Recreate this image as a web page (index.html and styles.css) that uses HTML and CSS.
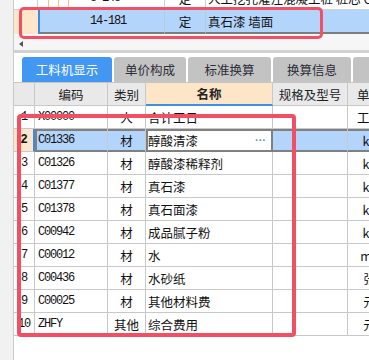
FILE: index.html
```html
<!DOCTYPE html>
<html lang="zh">
<head>
<meta charset="utf-8">
<link rel="stylesheet" href="styles.css">
</head>
<body>
<div class="app">
  <div class="strip"></div>
  <div class="main">
    <div class="tgrid">
      <div class="trow r0">
        <div class="c hd"></div>
        <div class="c tree mono">8-148</div>
        <div class="c ty">定</div>
        <div class="c nm">人工挖孔灌注混凝土桩 桩芯 C30</div>
      </div>
      <div class="trow r1">
        <div class="c hd"></div>
        <div class="c tree mono">14-181</div>
        <div class="c ty">定</div>
        <div class="c nm">真石漆 墙面</div>
      </div>
    </div>
    <div class="hscroll"><span class="arrow"></span></div>
    <div class="split"></div>
    <div class="tabs">
      <div class="tab on t1">工料机显示</div>
      <div class="tab t2">单价构成</div>
      <div class="tab t3">标准换算</div>
      <div class="tab t4">换算信息</div>
      <div class="tab t5"></div>
    </div>
    <div class="grid">
      <div class="row head">
        <div class="c"></div>
        <div class="c ctr">编码</div>
        <div class="c ctr">类别</div>
        <div class="c ctr name-h">名称</div>
        <div class="c ctr">规格及型号</div>
        <div class="c ctr">单位</div>
      </div>
      <div class="row">
        <div class="c num">1</div><div class="c code">X00000</div><div class="c ctr">人</div><div class="c nmc">合计工日</div><div class="c"></div><div class="c ctr">工日</div>
      </div>
      <div class="row sel">
        <div class="c num">2</div><div class="c code">C01336</div><div class="c ctr">材</div><div class="c nmc edit"><span>醇酸清漆</span><span class="dots">···</span></div><div class="c"></div><div class="c ctr">kg</div>
      </div>
      <div class="row">
        <div class="c num">3</div><div class="c code">C01326</div><div class="c ctr">材</div><div class="c nmc">醇酸漆稀释剂</div><div class="c"></div><div class="c ctr">kg</div>
      </div>
      <div class="row">
        <div class="c num">4</div><div class="c code">C01377</div><div class="c ctr">材</div><div class="c nmc">真石漆</div><div class="c"></div><div class="c ctr">kg</div>
      </div>
      <div class="row">
        <div class="c num">5</div><div class="c code">C01378</div><div class="c ctr">材</div><div class="c nmc">真石面漆</div><div class="c"></div><div class="c ctr">kg</div>
      </div>
      <div class="row">
        <div class="c num">6</div><div class="c code">C00942</div><div class="c ctr">材</div><div class="c nmc">成品腻子粉</div><div class="c"></div><div class="c ctr">kg</div>
      </div>
      <div class="row">
        <div class="c num">7</div><div class="c code">C00012</div><div class="c ctr">材</div><div class="c nmc">水</div><div class="c"></div><div class="c ctr">m3</div>
      </div>
      <div class="row">
        <div class="c num">8</div><div class="c code">C00436</div><div class="c ctr">材</div><div class="c nmc">水砂纸</div><div class="c"></div><div class="c ctr">张</div>
      </div>
      <div class="row">
        <div class="c num">9</div><div class="c code">C00025</div><div class="c ctr">材</div><div class="c nmc">其他材料费</div><div class="c"></div><div class="c ctr">元</div>
      </div>
      <div class="row">
        <div class="c num">10</div><div class="c code">ZHFY</div><div class="c ctr">其他</div><div class="c nmc">综合费用</div><div class="c"></div><div class="c ctr">元</div>
      </div>
    </div>
  </div>
</div>
<div class="mark m1"></div>
<div class="mark m2"></div>
</body>
</html>
```

FILE: styles.css
```css
* { box-sizing: border-box; }
body {
  margin: 0;
  width: 369px;
  height: 360px;
  overflow: hidden;
  background: #fff;
  font-family: "Noto Sans CJK SC", sans-serif;
  font-size: 12.5px;
  color: #111;
  position: relative;
}
.app { display: flex; height: 360px; }
.strip {
  width: 14px;
  flex: none;
  background: #f1f1f1;
  border-right: 1px solid #c9c9c9;
}
.main { flex: 1; min-width: 0; overflow: hidden; }

.mono {
  font-family: "Liberation Mono", monospace;
  font-size: 12px;
  letter-spacing: -1.2px;
}

/* top grid */
.tgrid { height: 34px; overflow: hidden; }
.trow { display: grid; height: 23px; }
.trow .c {
  display: flex;
  align-items: center;
  white-space: nowrap;
  overflow: hidden;
  border-right: 1px solid #d0d0d0;
  border-bottom: 1px solid #d0d0d0;
}
.r0 { margin-top: -13px; grid-template-columns: 24px 127px 41px 400px; }
.r1 { height: 24px; grid-template-columns: 26px 125px 41px 400px; }
.r1 .c { background: #b4d5fb; border-bottom: 2px solid #7d7d7d; border-right-color: #bcc8d6; }
.r1 .hd { background: #fde6c9; border-right: 2px solid #3a8ae6; border-bottom: none; }
.tree {
  --o: #f6c47e;
  background-image:
    linear-gradient(var(--o), var(--o)),
    linear-gradient(var(--o), var(--o)),
    linear-gradient(var(--o), var(--o)),
    linear-gradient(var(--o), var(--o));
  background-repeat: no-repeat;
  background-size: 1px 100%, 1px 100%, 1px 100%, 17px 1px;
  background-position: 10px 0, 20px 0, 30px 0, 30px 50%;
  padding-left: 52px;
}
.r1 .tree {
  background-position: 8px 0, 18px 0, 28px 0, 28px 50%;
  padding-left: 50px;
}
.ty { justify-content: center; }
.nm { padding-left: 2px; }

.hscroll { height: 16px; background: #f6f6f6; position: relative; padding: 7px 0 0 5px; }
.arrow {
  display: block;
  width: 0;
  height: 0;
  border-right: 4px solid #555;
  border-top: 3px solid transparent;
  border-bottom: 3px solid transparent;
}
.split { height: 3px; background: #d2d2d2; }

/* tabs */
.tabs {
  display: flex;
  gap: 2px;
  height: 29px;
  padding: 4px 0 0 8px;
  background: #fff;
}
.tab {
  height: 25px;
  flex: none;
  border-radius: 3px 3px 0 0;
  background: #c3c3c3;
  color: #2c2c38;
  display: flex;
  align-items: center;
  justify-content: center;
  font-size: 12.5px;
}
.tab.on { background: #4197f2; color: #fff; }
.t1 { width: 90px; }
.t2 { width: 72px; }
.t3 { width: 83px; }
.t4 { width: 78px; }
.t5 { width: 40px; }

/* main grid */
.grid { width: 400px; border-top: 1px solid #c6c6c6; }
.row {
  display: grid;
  grid-template-columns: 21px 73px 38px 127px 75px 44px 22px;
  height: 23px;
}
.row .c {
  display: flex;
  align-items: center;
  white-space: nowrap;
  overflow: hidden;
  border-right: 1px solid #c8c8c8;
  border-bottom: 1px solid #c8c8c8;
  background: #fff;
}
.head .c { background: #e9e9e9; color: #222; }
.head .name-h {
  background: #fde5c8;
  font-weight: bold;
  border-bottom: 2px solid #3d8ee6;
}
.ctr { justify-content: center; }
.num {
  justify-content: center;
  font-family: "Liberation Mono", monospace;
  font-size: 12px;
  letter-spacing: -1.2px;
}
.code {
  padding-left: 3px;
  font-family: "Liberation Mono", monospace;
  font-size: 12px;
  letter-spacing: -1.2px;
}
.nmc { padding-left: 2px; }

.sel .c {
  background: #b4d5fb;
  border-bottom-color: #808080;
  box-shadow: inset 0 2px 0 #808080, inset 0 -1px 0 #808080;
}
.sel .num {
  background: #fde6c9;
  font-weight: bold;
  border-right: 2px solid #3a8ae6;
  border-bottom-color: #c8c8c8;
  box-shadow: none;
}
.sel .code {
  box-shadow: inset 2px 2px 0 #808080, inset 0 -1px 0 #808080;
}
.sel .edit {
  background: #fff;
  border-right-color: #808080;
  justify-content: space-between;
  padding-right: 6px;
  box-shadow: inset 2px 2px 0 #808080, inset 0 -1px 0 #808080, inset -1px 0 0 #808080;
}
.dots { color: #4f93d8; font-size: 11px; letter-spacing: 0; font-weight: bold; font-family: "Liberation Sans", sans-serif; }

/* red annotation overlays */
.mark {
  position: absolute;
  border: 3.5px solid #f24f64;
  border-radius: 5px;
  pointer-events: none;
}
.m1 { left: 19px; top: 7px; width: 304px; height: 32px; }
.m2 { left: 17px; top: 114px; width: 279px; height: 223px; border-width: 4px; border-radius: 4px; }
```
